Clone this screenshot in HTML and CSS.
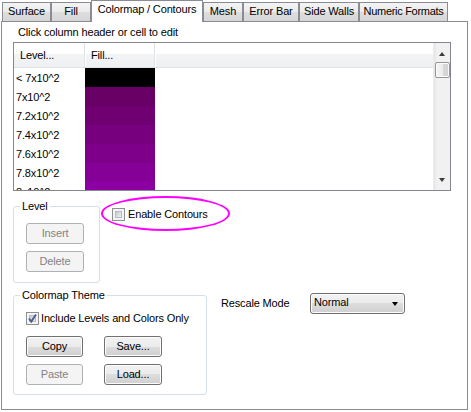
FILE: index.html
```html
<!DOCTYPE html>
<html>
<head>
<meta charset="utf-8">
<link rel="stylesheet" href="styles.css">
</head>
<body>
<div class="tabs">
  <div class="tab t-surface">Surface</div>
  <div class="tab t-fill">Fill</div>
  <div class="tab sel t-cm">Colormap / Contours</div>
  <div class="tab t-mesh">Mesh</div>
  <div class="tab t-err">Error Bar</div>
  <div class="tab t-side">Side Walls</div>
  <div class="tab t-num">Numeric Formats</div>
</div>
<div class="panel">
  <div class="hint">Click column header or cell to edit</div>
  <div class="grid">
    <div class="gmain">
      <div class="ghead">
        <div class="hc c1">Level...</div>
        <div class="hc c2">Fill...</div>
        <div class="hc c3"></div>
      </div>
      <div class="grow"><div class="c1">&lt; 7x10^2</div><div class="c2 f0"></div></div>
      <div class="grow"><div class="c1">7x10^2</div><div class="c2 f1"></div></div>
      <div class="grow"><div class="c1">7.2x10^2</div><div class="c2 f2"></div></div>
      <div class="grow"><div class="c1">7.4x10^2</div><div class="c2 f3"></div></div>
      <div class="grow"><div class="c1">7.6x10^2</div><div class="c2 f4"></div></div>
      <div class="grow"><div class="c1">7.8x10^2</div><div class="c2 f5"></div></div>
      <div class="grow"><div class="c1">8x10^2</div><div class="c2 f6"></div></div>
    </div>
    <div class="vscroll">
      <div class="arrow up"></div>
      <div class="thumb"></div>
      <div class="track"></div>
      <div class="arrow down"></div>
    </div>
  </div>

  <div class="row1">
    <fieldset class="group g-level">
      <legend>Level</legend>
      <div class="gbody level-body">
        <div class="btn dis w58">Insert</div>
        <div class="btn dis w58">Delete</div>
      </div>
    </fieldset>
    <label class="enable">
      <span class="cb"><span class="cb-in"></span></span>
      <span>Enable Contours</span>
    </label>
  </div>

  <div class="row2">
    <fieldset class="group g-theme">
      <legend>Colormap Theme</legend>
      <div class="gbody theme-body">
        <label class="chk">
          <span class="cb checked"><span class="cb-in"></span>
            <svg class="tick" width="13" height="13" viewBox="0 0 13 13"><polyline points="3,6.5 5.3,9.5 10,2.5" fill="none" stroke="#4a5d94" stroke-width="1.9"/></svg>
          </span>
          <span>Include Levels and Colors Only</span>
        </label>
        <div class="btnrow">
          <div class="btn w57">Copy</div>
          <div class="btn w58">Save...</div>
        </div>
        <div class="btnrow">
          <div class="btn dis w57">Paste</div>
          <div class="btn w58">Load...</div>
        </div>
      </div>
    </fieldset>
    <div class="rescale">
      <span class="rlabel">Rescale Mode</span>
      <div class="combo"><span>Normal</span><span class="carrow"></span></div>
    </div>
  </div>
</div>
</body>
</html>
```

FILE: styles.css
```css
* { box-sizing: border-box; }
html, body { margin: 0; padding: 0; }
body {
  width: 471px;
  height: 412px;
  overflow: hidden;
  background: #fff;
  font: 11px/13px "Liberation Sans", Arial, sans-serif;
  letter-spacing: -0.15px;
  color: #000;
}

/* tabs */
.tabs {
  display: flex;
  align-items: flex-end;
  height: 21px;
  padding-left: 2px;
}
.tab {
  height: 19px;
  border: 1px solid #898c95;
  border-bottom: none;
  background: linear-gradient(#f3f3f3, #ebebeb 50%, #dedede 50%, #d6d6d6);
  text-align: center;
  line-height: 17px;
  white-space: nowrap;
  overflow: hidden;
}
.tab.sel {
  height: 22px;
  margin-bottom: -1px;
  background: #fff;
  position: relative;
  z-index: 1;
  padding-top: 2px;
  line-height: 13px;
}
.t-surface { width: 49px; }
.t-fill { width: 40px; }
.t-cm { width: 112px; }
.t-mesh { width: 40px; }
.t-err { width: 56px; }
.t-side { width: 60px; }
.t-num { width: 89px; letter-spacing: -0.3px; }

/* panel */
.panel {
  margin-left: 1px;
  width: 467px;
  height: 389px;
  border: 1px solid #898c95;
  background: #fff;
  padding: 4px 0 0 11px;
}
.hint { padding-left: 5px; height: 13px; }

/* grid */
.grid {
  margin-top: 3px;
  width: 438px;
  height: 149px;
  border: 1px solid #828790;
  display: flex;
  overflow: hidden;
}
.gmain { flex: 1; overflow: hidden; }
.ghead {
  display: flex;
  height: 25px;
  background: linear-gradient(#fff, #fff 45%, #f3f4f6 45%, #eef0f2);
  border-bottom: 1px solid #e0e2e6;
}
.hc {
  line-height: 24px;
  padding-left: 6px;
  border-right: 1px solid #dfe2e6;
  box-shadow: 1px 0 0 #fff;
}
.hc.c3 { flex: 1; border-right: none; box-shadow: none; }
.c1 { width: 71px; }
.c2 { width: 70px; }
.grow { display: flex; height: 19px; }
.grow .c1 { line-height: 19px; padding-left: 2px; padding-top: 1px; }
.f0 { background: #000; }
.f1 { background: #690066; }
.f2 { background: #700072; }
.f3 { background: #77007e; }
.f4 { background: #7e008a; }
.f5 { background: #850096; }
.f6 { background: #8c00a3; }

/* scrollbar */
.vscroll {
  width: 17px;
  background: linear-gradient(90deg, #e6e6e6, #f1f1f1 20%, #f1f1f1);
  border-left: 1px solid #ececec;
  display: flex;
  flex-direction: column;
  align-items: center;
}
.arrow {
  width: 0;
  height: 0;
  border-left: 3.5px solid transparent;
  border-right: 3.5px solid transparent;
}
.arrow.up { margin-top: 9px; border-bottom: 4px solid #3c3c3c; }
.arrow.down { margin-bottom: 8px; border-top: 4px solid #3c3c3c; }
.thumb {
  margin-top: 6px;
  width: 15px;
  height: 16px;
  border: 1px solid #969696;
  border-radius: 2px;
  background: linear-gradient(90deg, #f5f5f5, #ececec 50%, #d8d8d8 50%, #d2d2d2);
  box-shadow: inset 0 0 0 1px #fbfbfb;
}
.track { flex: 1; }

/* rows */
.row1 {
  display: flex;
  align-items: flex-start;
  margin-top: 6px;
  height: 86px;
}
.group {
  margin: 0;
  padding: 0;
  min-width: 0;
  border: 1px solid #d5dfe5;
  border-radius: 3px;
}
.group legend {
  margin-left: 6px;
  padding: 0 2px;
  line-height: 13px;
}
.g-level {
  margin-top: 3px;
  width: 87px;
  height: 83px;
}
.level-body {
  padding: 10px 0 0 12px;
  display: flex;
  flex-direction: column;
  gap: 7px;
}
.btn {
  height: 21px;
  border: 1px solid #707070;
  border-radius: 3px;
  background: linear-gradient(#f2f2f2, #ebebeb 50%, #dddddd 50%, #cfcfcf);
  text-align: center;
  line-height: 19px;
  box-shadow: inset 0 0 0 1px #fcfcfc;
}
.btn.dis {
  border-color: #adb2b5;
  background: #f4f4f4;
  color: #838383;
  box-shadow: none;
}
.w57 { width: 57px; }
.w58 { width: 58px; }

.enable {
  margin-left: 1px;
  margin-top: -1px;
  width: 129px;
  height: 35px;
  border: 2px solid #ff00ff;
  border-radius: 50%;
  display: flex;
  align-items: flex-start;
  padding: 10px 0 0 9px;
  gap: 3px;
}
.enable span:last-child { line-height: 13px; margin-top: 0; }

.cb {
  position: relative;
  flex: none;
  width: 13px;
  height: 13px;
  border: 1px solid #8e8f8f;
  background: #f4f4f4;
  padding: 2px;
}
.cb-in {
  display: block;
  width: 7px;
  height: 7px;
  background: linear-gradient(135deg, #c7cbd1, #eceef0);
  border: 1px solid #b9bcc0;
}
.cb .tick { position: absolute; left: -1px; top: -1px; }

.row2 {
  display: flex;
  align-items: flex-start;
  margin-top: 6px;
}
.g-theme {
  width: 194px;
  height: 106px;
}
.theme-body { padding: 10px 0 0 12px; }
.chk { display: flex; align-items: flex-start; gap: 2px; height: 13px; }
.btnrow {
  display: flex;
  gap: 21px;
  margin-top: 7px;
}
.chk + .btnrow { margin-top: 11px; }

.rescale {
  margin-left: 14px;
  margin-top: 4px;
  display: flex;
  align-items: center;
}
.rlabel { width: 89px; }
.combo {
  width: 95px;
  height: 21px;
  border: 1px solid #707070;
  border-radius: 3px;
  background: linear-gradient(#f2f2f2, #ebebeb 50%, #dddddd 50%, #cfcfcf);
  box-shadow: inset 0 0 0 1px #fcfcfc;
  display: flex;
  align-items: center;
  justify-content: space-between;
  padding: 0 6px 0 3px;
  line-height: 13px;
}
.combo span:first-child { margin-top: -3px; }
.carrow {
  width: 0;
  height: 0;
  border-left: 3.5px solid transparent;
  border-right: 3.5px solid transparent;
  border-top: 4px solid #000;
}
```
